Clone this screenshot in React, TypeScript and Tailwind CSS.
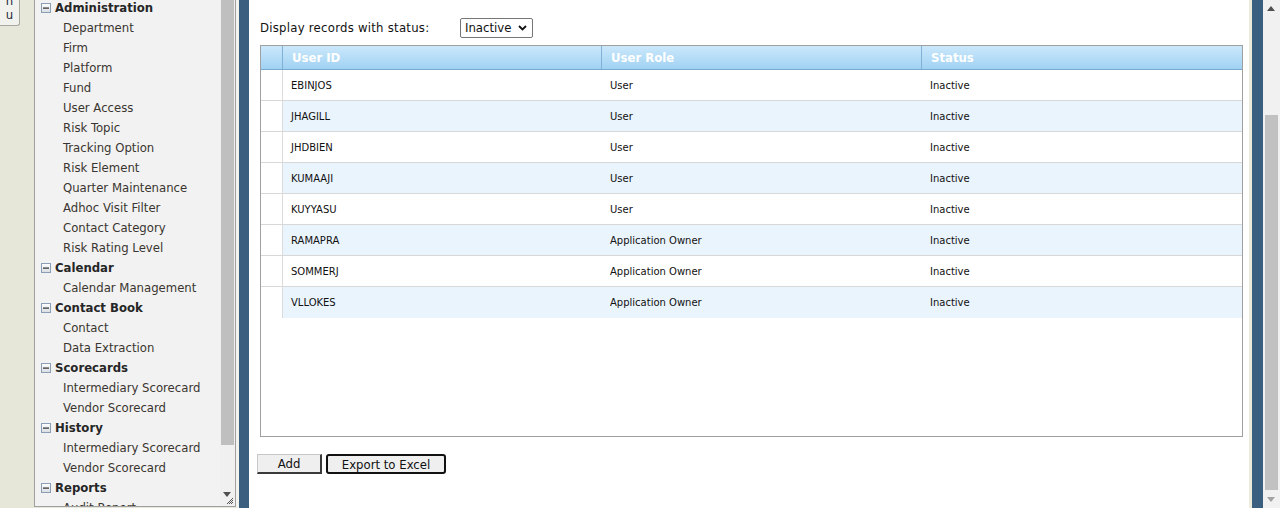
import React from "react";

const FONT = { fontFamily: '"DejaVu Sans Condensed", "DejaVu Sans", Verdana, sans-serif' };
const ROWFONT = { fontFamily: '"DejaVu Sans", Verdana, sans-serif' };

type Item = { label: string; header?: boolean };

const menu: Item[] = [
  { label: "Administration", header: true },
  { label: "Department" },
  { label: "Firm" },
  { label: "Platform" },
  { label: "Fund" },
  { label: "User Access" },
  { label: "Risk Topic" },
  { label: "Tracking Option" },
  { label: "Risk Element" },
  { label: "Quarter Maintenance" },
  { label: "Adhoc Visit Filter" },
  { label: "Contact Category" },
  { label: "Risk Rating Level" },
  { label: "Calendar", header: true },
  { label: "Calendar Management" },
  { label: "Contact Book", header: true },
  { label: "Contact" },
  { label: "Data Extraction" },
  { label: "Scorecards", header: true },
  { label: "Intermediary Scorecard" },
  { label: "Vendor Scorecard" },
  { label: "History", header: true },
  { label: "Intermediary Scorecard" },
  { label: "Vendor Scorecard" },
  { label: "Reports", header: true },
  { label: "Audit Report" },
];

const rows = [
  ["EBINJOS", "User", "Inactive"],
  ["JHAGILL", "User", "Inactive"],
  ["JHDBIEN", "User", "Inactive"],
  ["KUMAAJI", "User", "Inactive"],
  ["KUYYASU", "User", "Inactive"],
  ["RAMAPRA", "Application Owner", "Inactive"],
  ["SOMMERJ", "Application Owner", "Inactive"],
  ["VLLOKES", "Application Owner", "Inactive"],
];

function MinusBox() {
  return (
    <svg width="10" height="10" viewBox="0 0 10 10" className="shrink-0">
      <defs>
        <linearGradient id="mb" x1="0" y1="0" x2="0" y2="1">
          <stop offset="0" stopColor="#ffffff" />
          <stop offset="1" stopColor="#d8dde3" />
        </linearGradient>
      </defs>
      <rect x="0.5" y="0.5" width="9" height="9" fill="url(#mb)" stroke="#8a9fb5" />
      <rect x="2" y="4.5" width="6" height="1.2" fill="#2b2b2b" />
    </svg>
  );
}

export default function App() {
  return (
    <div className="w-[1280px] h-[508px] overflow-hidden bg-[#e6e6d9] flex text-[13px]" style={FONT}>
      {/* left strip with Menu tab */}
      <div className="w-[34px] shrink-0 relative">
        <div className="absolute left-0 top-[-6px] w-[20px] h-[32px] bg-[#f1f1ee] border-r border-b border-[#a9a9a0] rounded-br-[3px] flex flex-col items-center leading-[14px] text-[13px] text-[#1e2a3a]">
          <span>n</span>
          <span>u</span>
        </div>
      </div>

      {/* sidebar */}
      <div className="w-[202px] h-[507px] shrink-0 bg-[#f2f2f2] border-l border-r border-b border-[#a0a0a0] flex">
        <div className="flex-1 overflow-hidden">
          <div className="mt-[-2px] flex flex-col">
            {menu.map((m, i) =>
              m.header ? (
                <div key={i} className="h-[20px] flex items-center pl-[6px] gap-[4px] font-bold text-[#262626]">
                  <MinusBox />
                  <span>{m.label}</span>
                </div>
              ) : (
                <div key={i} className="h-[20px] flex items-center pl-[28px] text-[#3a3530] whitespace-nowrap">
                  {m.label}
                </div>
              )
            )}
          </div>
        </div>
        <div className="w-[15px] shrink-0 bg-[#f0f0f0] flex flex-col relative">
          <div className="mx-[1px] w-[13px] h-[445px] bg-[#bfbfbf]" />
          <div className="absolute left-[3px] top-[492px]">
            <svg width="8" height="5" viewBox="0 0 8 5">
              <path d="M0 0 L8 0 L4 5 Z" fill="#505050" />
            </svg>
          </div>
          <div className="absolute right-[1px] bottom-[1px]">
            <svg width="8" height="8" viewBox="0 0 8 8">
              <path d="M7 1 L1 7 M7 3 L3 7 M7 5 L5 7" stroke="#555" strokeWidth="1" />
            </svg>
          </div>
        </div>
      </div>

      <div className="w-[3px] shrink-0 bg-[#f3f3ee]" />
      <div className="w-[10px] shrink-0 bg-[#3b5f7e]" />

      {/* main */}
      <div className="w-[1000px] shrink-0 bg-white pl-[11px] pr-[6px] pt-[17px]">
        <div className="flex items-center h-[21px] text-[#111]">
          <span className="w-[200px] tracking-[0.25px]">Display records with status:</span>
          <div className="h-[20px] w-[73px] border border-[#767676] rounded-[2px] flex items-center pl-[4px] pr-[5px] justify-between bg-white">
            <span>Inactive</span>
            <svg width="9" height="6" viewBox="0 0 9 6">
              <path d="M1 1 L4.5 4.5 L8 1" stroke="#111" strokeWidth="1.8" fill="none" />
            </svg>
          </div>
        </div>

        <div className="mt-[7px] w-[983px] h-[392px] border border-[#a0a0a0] flex flex-col">
          <div className="h-[24px] flex border-b border-[#79a9d0] bg-gradient-to-b from-[#cbe8fb] to-[#a0d2f3] font-bold text-white text-[13px]">
            <div className="w-[22px] border-r border-[#80b2d8]" />
            <div className="w-[319px] border-r border-[#80b2d8] pl-[9px] flex items-center">User ID</div>
            <div className="w-[320px] border-r border-[#80b2d8] pl-[9px] flex items-center">User Role</div>
            <div className="flex-1 pl-[9px] flex items-center">Status</div>
          </div>
          {rows.map((r, i) => (
            <div
              key={i}
              style={ROWFONT}
              className={`h-[31px] flex text-[10px] text-[#111] ${i < rows.length - 1 ? "border-b border-[#d8d8d8]" : ""}`}
            >
              <div className="w-[22px] border-r border-[#dcdcdc] bg-white" />
              <div className={`flex-1 flex items-center ${i % 2 === 1 ? "bg-[#eaf4fd]" : "bg-white"}`}>
                <div className="w-[319px] pl-[8px]">{r[0]}</div>
                <div className="w-[320px] pl-[8px]">{r[1]}</div>
                <div className="flex-1 pl-[8px]">{r[2]}</div>
              </div>
            </div>
          ))}
        </div>

        <div className="mt-[17px] ml-[-3px] flex gap-[4px] text-[13px] text-[#111]">
          <button className="w-[65px] h-[20px] bg-[#efefef] border-t border-l border-[#c8c8c8] border-r-2 border-b-2 border-r-[#3a3a3a] border-b-[#3a3a3a] flex items-center justify-center leading-none">
            Add
          </button>
          <button className="w-[120px] h-[20px] bg-[#efefef] border-2 border-[#111] rounded-[3px] flex items-center justify-center leading-none">
            Export to Excel
          </button>
        </div>
      </div>

      <div className="w-[3px] shrink-0 bg-[#ecebdc]" />
      <div className="w-[11px] shrink-0 bg-[#3b5f7e]" />

      {/* page scrollbar */}
      <div className="w-[17px] shrink-0 bg-[#f1f1f1] relative">
        <div className="absolute left-[4px] top-[6px]">
          <svg width="8" height="5" viewBox="0 0 8 5">
            <path d="M0 5 L8 5 L4 0 Z" fill="#505050" />
          </svg>
        </div>
        <div className="absolute left-[2px] top-[115px] w-[13px] h-[375px] bg-[#c1c1c1]" />
        <div className="absolute left-[4px] top-[497px]">
          <svg width="8" height="5" viewBox="0 0 8 5">
            <path d="M0 0 L8 0 L4 5 Z" fill="#a3a3a3" />
          </svg>
        </div>
      </div>
    </div>
  );
}
